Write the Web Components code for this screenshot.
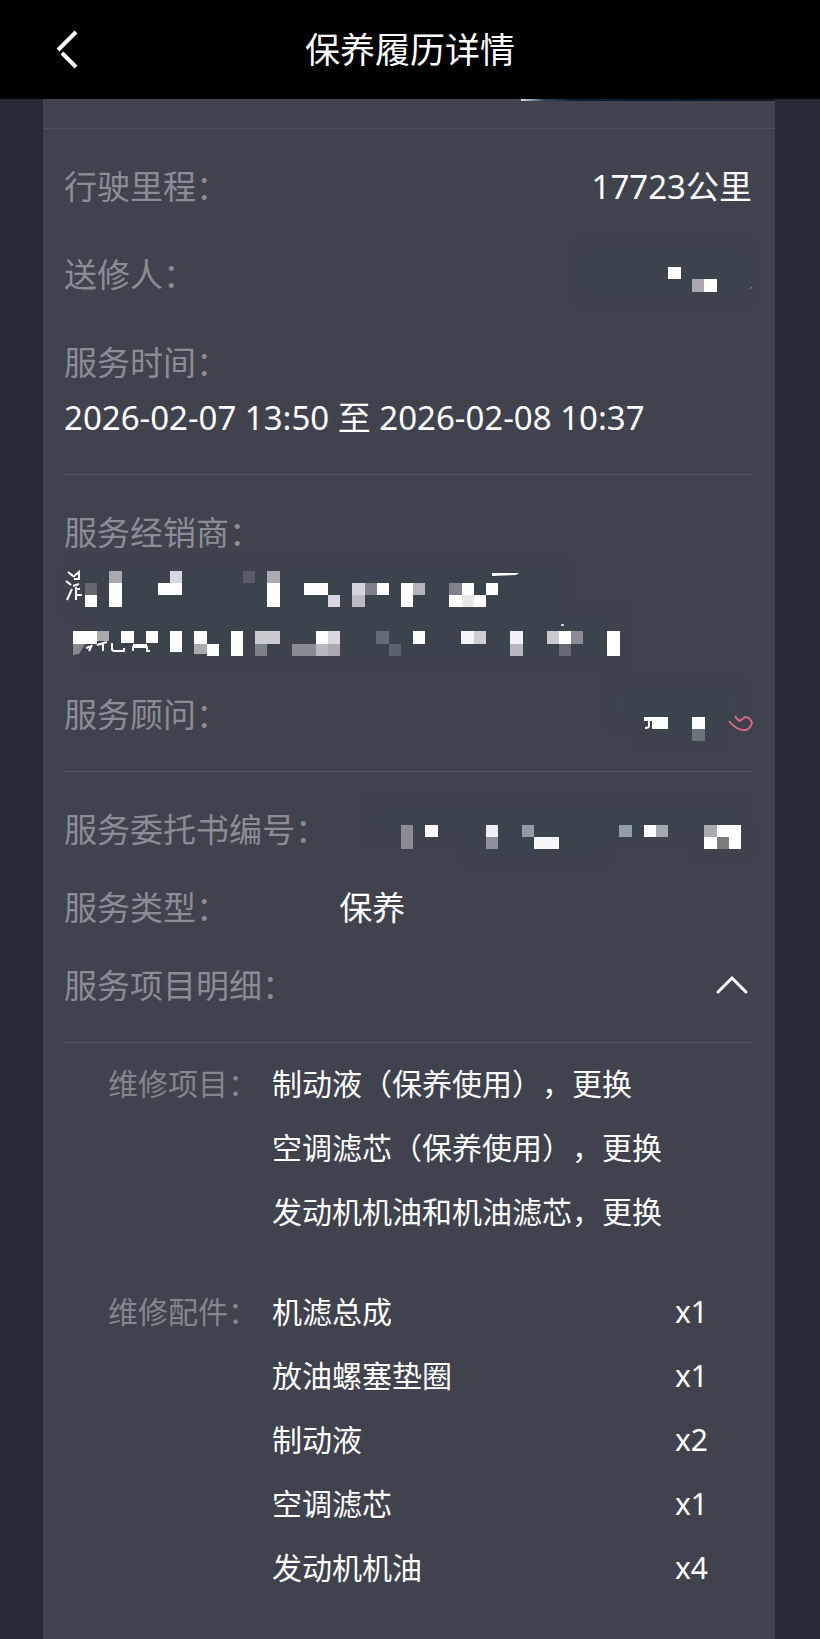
<!DOCTYPE html>
<html lang="zh-CN">
<head>
<meta charset="UTF-8">
<meta name="viewport" content="width=device-width, initial-scale=1">
<title>保养履历详情</title>
<style>
  body {
    margin: 0;
    background: #252a34;
    color: #ffffff;
    font-family: "Noto Sans", "Noto Sans CJK SC", sans-serif;
    text-spacing-trim: space-all;
  }
</style>
</head>
<body>
<service-page>
  <page-header slot="header">保养履历详情</page-header>

  <card-section>
    <info-row label="行驶里程：">17723公里</info-row>
    <info-row label="送修人："><masked-text name="sender"></masked-text></info-row>
    <info-row label="服务时间：" layout="stacked">2026-02-07 13:50 至 2026-02-08 10:37</info-row>
  </card-section>

  <card-section>
    <info-row label="服务经销商：" layout="block"><masked-text name="dealer"></masked-text></info-row>
    <info-row label="服务顾问：" layout="tight"><masked-text name="advisor"></masked-text></info-row>
  </card-section>

  <card-section compact>
    <info-row label="服务委托书编号："><masked-text name="order"></masked-text></info-row>
    <info-row label="服务类型：" layout="column">保养</info-row>
    <info-row label="服务项目明细："><collapse-button></collapse-button></info-row>
  </card-section>

  <detail-group label="维修项目：">
    <detail-item>制动液（保养使用），更换</detail-item>
    <detail-item>空调滤芯（保养使用），更换</detail-item>
    <detail-item>发动机机油和机油滤芯，更换</detail-item>
  </detail-group>

  <detail-group label="维修配件：">
    <detail-item count="x1">机滤总成</detail-item>
    <detail-item count="x1">放油螺塞垫圈</detail-item>
    <detail-item count="x2">制动液</detail-item>
    <detail-item count="x1">空调滤芯</detail-item>
    <detail-item count="x4">发动机机油</detail-item>
  </detail-group>
</service-page>

<script>
class ServicePage extends HTMLElement {
  constructor() {
    super();
    this.attachShadow({ mode: "open" });
    this.shadowRoot.innerHTML = `
      <style>
        :host {
          display: flex;
          flex-direction: column;
          min-height: 100vh;
        }
        main {
          flex: 1;
          box-sizing: border-box;
          margin: 0 45px 0 43px;
          padding-bottom: 36px;
          background: #40424e;
        }
        .banner {
          height: 29px;
          border-bottom: 1px solid #50525d;
        }
        .photo {
          width: 254px;
          height: 2px;
          margin-left: auto;
          background: linear-gradient(90deg, #dfe4ea, #33475c 9%, #0d2038 20%, #08142a 70%, #141822);
        }
      </style>
      <slot name="header"></slot>
      <main>
        <div class="banner"><div class="photo"></div></div>
        <slot></slot>
      </main>
    `;
  }
}

class PageHeader extends HTMLElement {
  constructor() {
    super();
    this.attachShadow({ mode: "open" });
    this.shadowRoot.innerHTML = `
      <style>
        :host {
          display: grid;
          grid-template-columns: 1fr auto 1fr;
          align-items: center;
          height: 99px;
          padding: 0 48px;
          background: #000000;
        }
        button {
          justify-self: start;
          width: 40px;
          height: 48px;
          padding: 0;
          border: 0;
          background: none;
          cursor: pointer;
        }
        svg {
          display: block;
        }
        h1 {
          margin: 0;
          font-size: 35px;
          line-height: 48px;
          font-weight: 400;
        }
      </style>
      <button type="button" aria-label="返回">
        <svg width="40" height="48" viewBox="0 0 40 48" fill="none" stroke="#ffffff" stroke-width="4">
          <path d="M28 6 10 24M14 27 28 41"/>
        </svg>
      </button>
      <h1><slot></slot></h1>
    `;
  }
}

class CardSection extends HTMLElement {
  constructor() {
    super();
    this.attachShadow({ mode: "open" });
    this.shadowRoot.innerHTML = `
      <style>
        :host {
          display: flex;
          flex-direction: column;
          gap: 44px;
          margin: 0 23px 0 21px;
          padding: 36px 0 34px;
          border-bottom: 1px solid #50545f;
        }
        :host([compact]) {
          gap: 34px;
        }
      </style>
      <slot></slot>
    `;
  }
}

class InfoRow extends HTMLElement {
  constructor() {
    super();
    this.attachShadow({ mode: "open" });
  }

  connectedCallback() {
    this.shadowRoot.innerHTML = `
      <style>
        :host {
          display: flex;
          justify-content: space-between;
          font-size: 33px;
          line-height: 44px;
        }
        .label {
          color: #8b8d95;
        }
        :host([layout="stacked"]) {
          flex-direction: column;
          gap: 11px;
        }
        :host([layout="block"]) {
          flex-direction: column;
        }
        /* follows the two masked dealer lines */
        :host([layout="tight"]) {
          margin-top: -22px;
        }
        :host([layout="column"]) {
          justify-content: flex-start;
        }
        :host([layout="column"]) .label {
          flex: 0 0 40%;
        }
      </style>
      <span class="label">${this.getAttribute("label")}</span>
      <span class="value"><slot></slot></span>
    `;
  }
}

// Each mask: viewBox, smudge rects [x, y, w, h], cells [x, y, w, h, colour], extra strokes
const MASKS = {
  sender: {
    box: [572, 253, 180, 44],
    smudges: [[578, 248, 172, 48]],
    cells: [
      [668, 267, 13, 12, "#fff"], [692, 279, 12, 13, "#a9a8b1"], [704, 279, 13, 13, "#fff"]
    ],
    extra: `<path d="M750 289l2-2" stroke="#7f8990"/>`
  },
  dealer: {
    box: [64, 555, 556, 116],
    smudges: [[72, 566, 490, 46], [90, 612, 530, 48]],
    cells: [
      [85, 583, 12, 12, "#66666f"], [85, 595, 12, 12, "#fff"],
      [109, 571, 13, 12, "#a9a9b2"], [109, 583, 13, 24, "#fff"],
      [170, 571, 12, 12, "#d8d8e2"], [158, 583, 24, 12, "#fff"],
      [243, 571, 12, 12, "#5b5a68"],
      [267, 571, 13, 12, "#acabb4"], [267, 583, 13, 24, "#fff"],
      [304, 583, 24, 12, "#fff"], [328, 595, 12, 12, "#d9d8e0"],
      [352, 583, 13, 12, "#d5d4dd"], [352, 595, 13, 12, "#bcb9c3"],
      [365, 583, 12, 12, "#80818a"], [377, 583, 12, 12, "#fff"],
      [401, 583, 12, 24, "#fff"], [413, 583, 12, 12, "#b3b5ba"],
      [449, 583, 13, 12, "#7f828c"], [449, 595, 13, 12, "#fff"],
      [462, 583, 12, 12, "#fff"], [462, 595, 12, 12, "#e8eae8"],
      [474, 595, 12, 12, "#fff"], [486, 583, 12, 12, "#fff"],
      [73, 631, 24, 13, "#fff"], [97, 631, 12, 10, "#a9a9ad"],
      [121, 631, 13, 12, "#fff"], [146, 631, 12, 12, "#fff"],
      [170, 631, 12, 20, "#fff"],
      [194, 631, 13, 13, "#fff"], [194, 644, 13, 10, "#a9abb0"], [207, 644, 12, 12, "#fff"],
      [231, 631, 12, 25, "#fff"],
      [255, 631, 25, 13, "#ccc9d0"], [255, 644, 12, 12, "#7c8088"],
      [292, 644, 24, 12, "#898c94"],
      [316, 631, 12, 13, "#fff"], [316, 644, 12, 12, "#b9b8c0"],
      [328, 631, 12, 13, "#dad8de"], [328, 644, 12, 12, "#aba8b2"],
      [376, 631, 13, 13, "#656b75"], [389, 644, 12, 12, "#5b626b"],
      [413, 631, 12, 13, "#fff"],
      [461, 631, 13, 13, "#f5f3f7"], [474, 631, 12, 13, "#cfccd2"],
      [510, 631, 13, 13, "#f1f0f6"], [510, 644, 13, 12, "#b8b6c0"],
      [547, 631, 12, 13, "#cbc9d0"], [559, 631, 12, 13, "#fff"],
      [559, 644, 12, 12, "#666874"], [571, 631, 12, 13, "#8a8b95"],
      [607, 631, 13, 25, "#fff"]
    ],
    extra: `
      <path d="M73 644h12l-6 10-6 1z" fill="#85888c"/>
      <g fill="none" stroke="#fff" stroke-width="2">
        <path d="M68 572l5 4M66 581l5 4M67 600l5-11M73 577l6-5v7h-5M73 586l6-2M76 587v13M76 595h6M76 589h4"/>
        <path d="M86 648l6-2M92 645l-3 6M97 645l10-3M103 644v7M112 643v6q0 2 3 2h9v-3M133 645h14M133 651v-4h14v4h3M170 651h12"/>
      </g>
      <path d="M492 573h27l-3 2-24 1z" fill="#fff"/>
      <path d="M561 625h3" stroke="#c9d0d6" stroke-width="2"/>`
  },
  advisor: {
    box: [608, 693, 144, 44],
    smudges: [[612, 686, 128, 36], [646, 720, 70, 22]],
    cells: [
      [652, 717, 16, 12, "#fff"], [644, 717, 8, 4, "#fff"],
      [692, 717, 13, 12, "#fff"], [692, 729, 13, 12, "#6b737b"]
    ],
    extra: `
      <path d="M649 720v6q0 2-4 2" fill="none" stroke="#fff" stroke-width="2"/>
      <path d="M729 721Q737 731 746 730Q750 729 752 723Q750 717 745 717L740 721Q737 720 735 716" fill="none" stroke="#d4697f" stroke-width="2"/>`
  },
  order: {
    box: [370, 809, 382, 44],
    smudges: [[372, 806, 370, 30], [466, 832, 140, 26], [700, 832, 46, 20]],
    cells: [
      [401, 826, 12, 24, "#8c8a93"], [425, 826, 13, 12, "#fff"],
      [486, 826, 12, 12, "#eef0f8"], [486, 838, 12, 12, "#8c909a"],
      [522, 826, 12, 12, "#8f9aa2"], [534, 838, 25, 12, "#f7f6fb"],
      [619, 826, 13, 12, "#939fa6"],
      [644, 826, 12, 12, "#fff"], [656, 826, 12, 12, "#a3a9b2"],
      [704, 826, 13, 12, "#a9abb0"], [704, 838, 13, 12, "#fff"],
      [717, 826, 12, 12, "#fff"], [717, 838, 12, 12, "#7b7b7b"],
      [729, 826, 12, 24, "#fff"]
    ],
    extra: ""
  }
};

class MaskedText extends HTMLElement {
  constructor() {
    super();
    this.attachShadow({ mode: "open" });
  }

  connectedCallback() {
    const mask = MASKS[this.getAttribute("name")];
    const [x, y, width, height] = mask.box;
    const rect = ([rx, ry, rw, rh, color]) =>
      `<rect x="${rx}" y="${ry}" width="${rw}" height="${rh}" fill="${color || "#3b444d"}"/>`;

    this.shadowRoot.innerHTML = `
      <style>
        :host {
          display: block;
          height: ${height}px;
        }
        svg {
          display: block;
          overflow: visible;
        }
      </style>
      <svg width="${width}" height="${height}" viewBox="${x} ${y} ${width} ${height}" aria-hidden="true">
        <filter id="soft" x="-20%" y="-50%" width="140%" height="200%" color-interpolation-filters="sRGB">
          <feGaussianBlur stdDeviation="7"/>
        </filter>
        <g filter="url(#soft)">${mask.smudges.map(rect).join("")}</g>
        <g shape-rendering="crispEdges">${mask.cells.map(rect).join("")}</g>
        ${mask.extra}
      </svg>
    `;
  }
}

class CollapseButton extends HTMLElement {
  constructor() {
    super();
    this.attachShadow({ mode: "open" });
    this.shadowRoot.innerHTML = `
      <style>
        :host {
          display: block;
        }
        button {
          display: block;
          padding: 0;
          border: 0;
          background: none;
          cursor: pointer;
        }
        svg {
          display: block;
        }
      </style>
      <button type="button" aria-label="收起" aria-expanded="true">
        <svg width="40" height="44" viewBox="0 0 40 44" fill="none" stroke="#ffffff" stroke-width="3" stroke-linecap="round">
          <path d="M6 28 20 14 34 28"/>
        </svg>
      </button>
    `;
  }
}

class DetailGroup extends HTMLElement {
  constructor() {
    super();
    this.attachShadow({ mode: "open" });
  }

  connectedCallback() {
    this.shadowRoot.innerHTML = `
      <style>
        :host {
          display: flex;
          gap: 14px;
          margin: 9px 67px 36px 65px;
          font-size: 30px;
          line-height: 64px;
        }
        :host(:last-child) {
          margin-bottom: 0;
        }
        .label {
          flex: none;
          color: #84868e;
        }
        .items {
          flex: 1;
        }
      </style>
      <span class="label">${this.getAttribute("label")}</span>
      <div class="items"><slot></slot></div>
    `;
  }
}

class DetailItem extends HTMLElement {
  constructor() {
    super();
    this.attachShadow({ mode: "open" });
  }

  connectedCallback() {
    const count = this.getAttribute("count");
    this.shadowRoot.innerHTML = `
      <style>
        :host {
          display: flex;
          justify-content: space-between;
        }
      </style>
      <span><slot></slot></span>
      ${count ? `<span>${count}</span>` : ""}
    `;
  }
}

customElements.define("service-page", ServicePage);
customElements.define("page-header", PageHeader);
customElements.define("card-section", CardSection);
customElements.define("info-row", InfoRow);
customElements.define("masked-text", MaskedText);
customElements.define("collapse-button", CollapseButton);
customElements.define("detail-group", DetailGroup);
customElements.define("detail-item", DetailItem);
</script>
</body>
</html>
